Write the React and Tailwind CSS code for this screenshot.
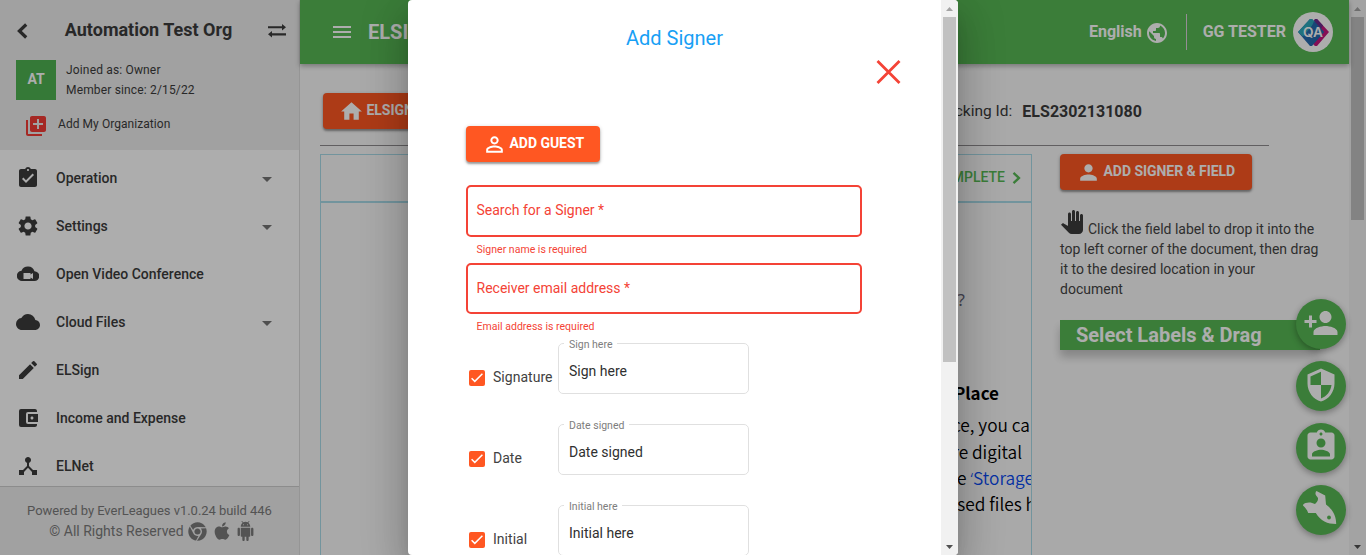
import React from "react";
import {
  MdAssignmentTurnedIn, MdSettings, MdCloud, MdEdit, MdAccountBalanceWallet, MdDeviceHub,
  MdLibraryAdd, MdArrowDropDown, MdPublic, MdHome, MdPersonOutline, MdPerson, MdPersonAdd,
  MdSecurity, MdAssignmentInd, MdPanTool, MdMenu,
} from "react-icons/md";
import { FaChrome, FaApple } from "react-icons/fa";

const BackIcon = () => (
  <svg width="12" height="16" viewBox="0 0 12 16" fill="none" stroke="currentColor" strokeWidth="3.200" className="-ml-px mr-px mt-0.5"><path d="M10.200 1.500L3.400 8l6.800 6.500" /></svg>
);

const SwapIcon = () => (
  <svg width="18" height="14" viewBox="0 0 18 14" fill="currentColor" className="mt-0.5">
    <path d="M0 2.200h14V0L18 3.200l-4 3.200V4.300H0zM18 9.300H4V7.100l-4 3.200 4 3.200v-2.100h14z" />
  </svg>
);

const CloudVideoIcon = () => (
  <svg width="22" height="16" viewBox="0 0 22 16">
    <path fill="currentColor" d="M17.500 5.200A7 7 0 0 0 4.500 4.700 5 5 0 0 0 5.500 15h11.800a4.900 4.900 0 0 0 .2-9.800z" />
    <path fill="#fff" d="M6.500 7h7v1.600L16 7v6l-2.500-1.600V13h-7z" />
  </svg>
);

const AndroidIcon = () => (
  <svg width="19" height="20" viewBox="0 0 24 24" preserveAspectRatio="none" fill="currentColor" className="ml-[4px]">
    <path d="M6 18c0 .55.45 1 1 1h1v3.500c0 .83.67 1.500 1.500 1.500s1.500-.67 1.500-1.500V19h2v3.500c0 .83.67 1.500 1.500 1.500s1.500-.67 1.500-1.500V19h1c.55 0 1-.45 1-1V8H6v10zM3.500 8C2.670 8 2 8.670 2 9.500v7c0 .83.67 1.500 1.500 1.500S5 17.330 5 16.500v-7C5 8.670 4.330 8 3.500 8zm17 0c-.83 0-1.500.67-1.500 1.500v7c0 .83.67 1.500 1.500 1.500s1.500-.67 1.500-1.500v-7c0-.83-.67-1.500-1.500-1.500zm-4.970-5.840l1.300-1.300c.2-.2.2-.51 0-.71-.2-.2-.51-.2-.71 0l-1.480 1.480C13.850 1.230 12.950 1 12 1c-.96 0-1.860.23-2.660.63L7.850.15c-.2-.2-.51-.2-.71 0-.2.2-.2.51 0 .71l1.310 1.310C6.970 3.260 6 5.010 6 7h12c0-1.990-.97-3.750-2.470-4.840zM10 5H9V4h1v1zm5 0h-1V4h1v1z" />
  </svg>
);

const FishIcon = () => (
  <svg width="50" height="50" viewBox="0 0 50 50">
    <path
      fill="currentColor"
      d="M20.500 6l8.700 4.500L30 19.500C36 24 40.200 30 40.200 39c-8.700 0-15.700-3-20.400-11h-7.600C11.300 25 9 22.500 7 20.500c0-1 1-2 2.500-2.500 3.500-1 6.500-.5 9.500 1 2-2 3.300-3.800 3-6-1.200-1.800-2.800-2.800-2.500-5 .1-1 .5-1.600 1-2z"
    />
    <circle cx="33" cy="32.500" r="1.900" fill="#57b954" />
  </svg>
);

const QaLogo = () => (
  <svg width="40" height="40" viewBox="0 0 40 40">
    <circle cx="20" cy="20" r="20" fill="#fff" />
    <path d="M22 7h2l12 13-12 14h-2l-3-3 11-11-9-10z" fill="#c4157e" />
    <path d="M22 7h2l6 6.500-2 3.500-8-7z" fill="#6a2b8c" />
    <path d="M17 7h2l12 13-12 14h-2L5 20z" fill="#2469ae" />
    <path d="M17 7h2l3 3-12 14.500L5 20z" fill="#2fa9bc" />
    <path d="M21 9l10 11-10 11-5-9z" fill="#2469ae" />
    <text x="20" y="24.500" textAnchor="middle" textLength="20" lengthAdjust="spacingAndGlyphs" fontFamily="Inter, sans-serif" fontSize="13" fontWeight="600" fill="#fff">QA</text>
  </svg>
);

const menu = [
  { label: "Operation", icon: <MdAssignmentTurnedIn size={24} />, more: true },
  { label: "Settings", icon: <MdSettings size={24} />, more: true },
  { label: "Open Video Conference", icon: <CloudVideoIcon /> },
  { label: "Cloud Files", icon: <MdCloud size={24} />, more: true },
  { label: "ELSign", icon: <MdEdit size={24} /> },
  { label: "Income and Expense", icon: <MdAccountBalanceWallet size={24} /> },
  { label: "ELNet", icon: <MdDeviceHub size={24} /> },
];

function Sidebar() {
  return (
    <aside className="flex h-full w-[300px] shrink-0 flex-col border-r border-[#dcdcdc] bg-white text-[#3c3c3c]">
      <div className="h-[150px] shrink-0 bg-[#ededed]">
        <div className="flex h-[60px] items-center pl-[17px] pr-[13px]">
          <BackIcon />
          <h1 className="flex-1 pb-px text-center text-[18px] font-bold">Automation Test Org</h1>
          <SwapIcon />
        </div>
        <div className="flex pl-4">
          <div className="flex size-10 items-center justify-center bg-[#4fb352] pb-0.5 text-[14px] font-bold text-white">AT</div>
          <div className="pl-[10px] text-[12px] leading-5 tracking-[0.16px]">
            <p>Joined as: Owner</p>
            <p>Member since: 2/15/22</p>
          </div>
        </div>
        <div className="flex h-12 items-center pl-6 pt-[3px]">
          <MdLibraryAdd size={24} className="text-[#f33b36]" />
          <span className="pb-1 pl-[10px] text-[12px] tracking-[0.06px]">Add My Organization</span>
        </div>
      </div>
      <nav className="min-h-0 flex-1 overflow-hidden pt-1">
        {menu.map((m) => (
          <div key={m.label} className="flex h-12 items-center pl-4 pr-5">
            <span className="flex w-6 justify-center">{m.icon}</span>
            <span className="flex-1 pl-4 text-[14px] font-medium">{m.label}</span>
            {m.more && <MdArrowDropDown size={24} className="mt-0.5 text-[#757575]" />}
          </div>
        ))}
      </nav>
      <footer className="h-[69px] shrink-0 border-t border-[#cfcfcf] bg-[#ededed] pt-[14px] text-center text-[13px] leading-5 text-[#7b7b7b]">
        <p className="tracking-[-0.04px]">Powered by EverLeagues v1.0.24 build 446</p>
        <p className="flex items-center justify-center pl-[5px] text-[14px]">
          © All Rights Reserved
          <FaChrome size={19} className="ml-1" />
          <FaApple size={20} className="ml-[5px]" />
          <AndroidIcon />
        </p>
      </footer>
    </aside>
  );
}

function OrangeButton({ icon, children, className }) {
  return (
    <button className={"flex h-9 shrink-0 items-center rounded bg-[#ff5722] text-[14px] font-bold tracking-[-0.05px] text-white shadow-[0_2px_2px_rgba(0,0,0,0.3),0_1px_4px_rgba(0,0,0,0.2)] " + className}>
      {icon}
      <span className="-ml-[0.5px] pb-px">{children}</span>
    </button>
  );
}

const documentLines = [
  { key: "a", body: "files in one place, you ca", pad: "pr-[1px]" },
  { key: "b", body: "and share digital", pad: "pr-[9px]" },
  { key: "c", body: <>Use the <span className="text-[#0a4af0]"><span className="font-['Noto_Sans',sans-serif]">‘</span>Storage</span></>, pad: "-mr-[3px]" },
  { key: "d", body: "processed files h", pad: "-mr-[5px]" },
];

const actions = [
  { key: "add", icon: <MdPersonAdd size={36} />, pad: "pb-[3px]" },
  { key: "security", icon: <MdSecurity size={36} />, pad: "pb-[3px]" },
  { key: "assignment", icon: <MdAssignmentInd size={36} />, pad: "pb-[4px]" },
  { key: "fish", icon: <FishIcon />, pad: "" },
];

function Scrollbar({ thumb, width }) {
  return (
    <div className={"flex h-full shrink-0 flex-col items-center bg-[#f1f1f1] " + width}>
      <svg width="17" height="17" viewBox="0 0 17 17" className="shrink-0"><path d="M5 11h7L8.500 7z" fill="#a3a3a3" /></svg>
      <div className={"w-[13px] bg-[#c1c1c1] " + thumb} />
      <div className="flex-1" />
      <svg width="17" height="17" viewBox="0 0 17 17" className="shrink-0"><path d="M5 7h7L8.500 11z" fill="#505050" /></svg>
    </div>
  );
}

function Page() {
  return (
    <div className="flex min-w-0 flex-1 flex-col">
      <header className="z-10 flex h-16 shrink-0 items-center bg-[#57b954] pl-[30px] pr-4 text-white shadow-[0_2px_5px_rgba(0,0,0,0.3)]">
        <MdMenu size={24} />
        <span className="flex-1 pl-[14px] text-[20px] font-bold">ELSIGN</span>
        <span className="text-[16px] font-bold">English</span>
        <MdPublic size={24} className="ml-[3px] mt-px" />
        <span className="ml-[17px] h-9 w-px bg-[#dcd0dc]" />
        <span className="ml-4 mr-[7px] text-[16px] font-bold">GG TESTER</span>
        <QaLogo />
      </header>
      <div className="ml-5 flex h-[82px] w-[949px] shrink-0 items-center border-b border-[#8f8c8f] pr-[127px]">
        <OrangeButton className="ml-[3px] mt-[13px] w-[150px] pl-4" icon={<MdHome size={25} className="mr-[3px]" />}>ELSIGN</OrangeButton>
        <div className="mt-[14px] flex flex-1 items-center justify-end text-[15.500px] text-[#3c3c3c]">
          <span>Tracking Id:</span>
          <b className="ml-[10px] text-[16px] tracking-[0.03px]">ELS2302131080</b>
        </div>
      </div>
      <div className="flex flex-1 pl-5 pt-2">
        <section className="flex w-[712px] flex-col overflow-hidden border border-b-0 border-[#a9dbe8]">
          <div className="flex h-[48px] shrink-0 items-center justify-end border-b-2 border-[#a9dbe8] pr-[8px] text-[14px] font-medium text-[#57b954]">
            <span className="pb-0.5">COMPLETE</span>
            <svg width="11" height="14" viewBox="0 0 11 14" fill="none" stroke="currentColor" strokeWidth="2.300" className="ml-[7px]"><path d="M1.500 1.800L7 7l-5.500 5.200" /></svg>
          </div>
          <div className="flex flex-1 flex-col items-end overflow-hidden whitespace-nowrap pt-[84px] font-['Noto_Sans_CJK_SC',sans-serif] text-[17.300px] font-[350] leading-[26.400px] text-black">
            <p className="pr-[66px] font-['Noto_Sans',sans-serif] text-[17px] font-normal text-[#68687a]">?</p>
            <p className="mt-[67px] pr-[32px] text-[17px] font-bold">One Place</p>
            <div className="mt-[5.500px] flex flex-col items-end">
              {documentLines.map((l) => <p key={l.key} className={"h-[26.400px] " + l.pad}>{l.body}</p>)}
            </div>
          </div>
        </section>
        <section className="ml-7 w-[260px]">
          <OrangeButton className="w-[192px] pl-[16px]" icon={<MdPerson size={25} className="mr-[3px]" />}>ADD SIGNER &amp; FIELD</OrangeButton>
          <p className="mt-[20px] text-[14px] leading-5 text-[#454545]">
            <MdPanTool size={24} className="mr-1 inline align-baseline text-[#3c3c3c]" />
            Click the field label to drop it into the top left corner of the document, then drag it to the desired location in your document
          </p>
          <h2 className="mt-[21px] h-[30px] bg-[#57b954] pl-4 text-[20px] font-bold leading-[30px] text-white shadow-[0_7px_10px_rgba(0,0,0,0.22)]">Select Labels &amp; Drag</h2>
        </section>
      </div>
    </div>
  );
}

function CheckRow({ label, caption }) {
  return (
    <div className="flex h-[81px] items-start">
      <div className="flex w-[92px] items-center pl-[3px] pt-[24px] text-[14px] tracking-[0.03px] text-[#424242]">
        <span className="flex size-4 items-center justify-center rounded-[2px] bg-[#ff5722]">
          <svg width="12" height="10" viewBox="0 0 12 10" fill="none" stroke="#fff" strokeWidth="1.500"><path d="M.6 5.200l3.200 3.200L11.400.8" /></svg>
        </span>
        <span className="pl-2">{label}</span>
      </div>
      <fieldset className="-mt-[7px] h-[58px] w-[191px] rounded-[5px] border border-[#e0e0e0] pl-[5px]">
        <legend className="h-[14px] px-[5px] text-[10.500px] leading-[17px] text-[#7d7d7d]">{caption}</legend>
        <div className="pl-[5px] pt-[11px] text-[14px] leading-5 text-[#303030]">{caption}</div>
      </fieldset>
    </div>
  );
}

function Modal() {
  return (
    <div className="absolute left-[408px] top-0 flex h-[555px] w-[550px] overflow-hidden rounded bg-white shadow-[0_11px_15px_-7px_rgba(0,0,0,0.2),0_24px_38px_3px_rgba(0,0,0,0.14),0_9px_46px_8px_rgba(0,0,0,0.12)]">
      <div className="flex-1 overflow-hidden pl-[58px]">
        <h2 className="pr-[58px] pt-[23px] text-center text-[20px] leading-[30px] text-[#18a0f5]">Add Signer</h2>
        <div className="flex justify-end pr-[40px] pt-[7px]">
          <svg width="25" height="24" viewBox="0 0 25 24" stroke="#f44336" strokeWidth="2.800"><path d="M1.500 1l22 22M23.500 1l-22 22" /></svg>
        </div>
        <OrangeButton className="mt-[42px] w-[134px] pl-4" icon={<MdPersonOutline size={25} className="mr-[3px]" />}>ADD GUEST</OrangeButton>
        <div className="mt-[23px] flex h-[52px] w-[396px] items-center rounded-[5px] border-2 border-[#f44336] pb-px pl-[8.500px] text-[14px] text-[#f44336]">Search for a Signer *</div>
        <p className="mt-[6px] pl-[10.500px] text-[10.500px] leading-[14px] tracking-[0.02px] text-[#f44336]">Signer name is required</p>
        <div className="mt-[6px] flex h-[51px] w-[396px] items-center rounded-[5px] border-2 border-[#f44336] pl-[8.500px] text-[14px] text-[#f44336]">Receiver email address *</div>
        <p className="mt-[6px] pl-[10.500px] text-[10.500px] leading-[14px] tracking-[0.02px] text-[#f44336]">Email address is required</p>
        <div className="mt-[9px]">
          <CheckRow label="Signature" caption="Sign here" />
          <CheckRow label="Date" caption="Date signed" />
          <CheckRow label="Initial" caption="Initial here" />
        </div>
      </div>
      <Scrollbar width="w-[17px]" thumb="h-[345px]" />
    </div>
  );
}

export default function App() {
  return (
    <div className="relative flex h-[555px] w-[1366px] overflow-hidden bg-[#fafafa] font-[Roboto,sans-serif]">
      <Sidebar />
      <Page />
      <Scrollbar width="w-[17px]" thumb="h-[203px]" />
      <div className="absolute left-[1296px] top-[299px] flex flex-col gap-3">
        {actions.map((a) => (
          <button key={a.key} className={"flex size-[50px] items-center justify-center rounded-full bg-[#57b954] text-white shadow-[0_2px_7px_rgba(0,0,0,0.35)] " + a.pad}>{a.icon}</button>
        ))}
      </div>
      <div className="absolute inset-0 z-20 bg-black/32" />
      <div className="absolute inset-0 z-30"><Modal /></div>
    </div>
  );
}
